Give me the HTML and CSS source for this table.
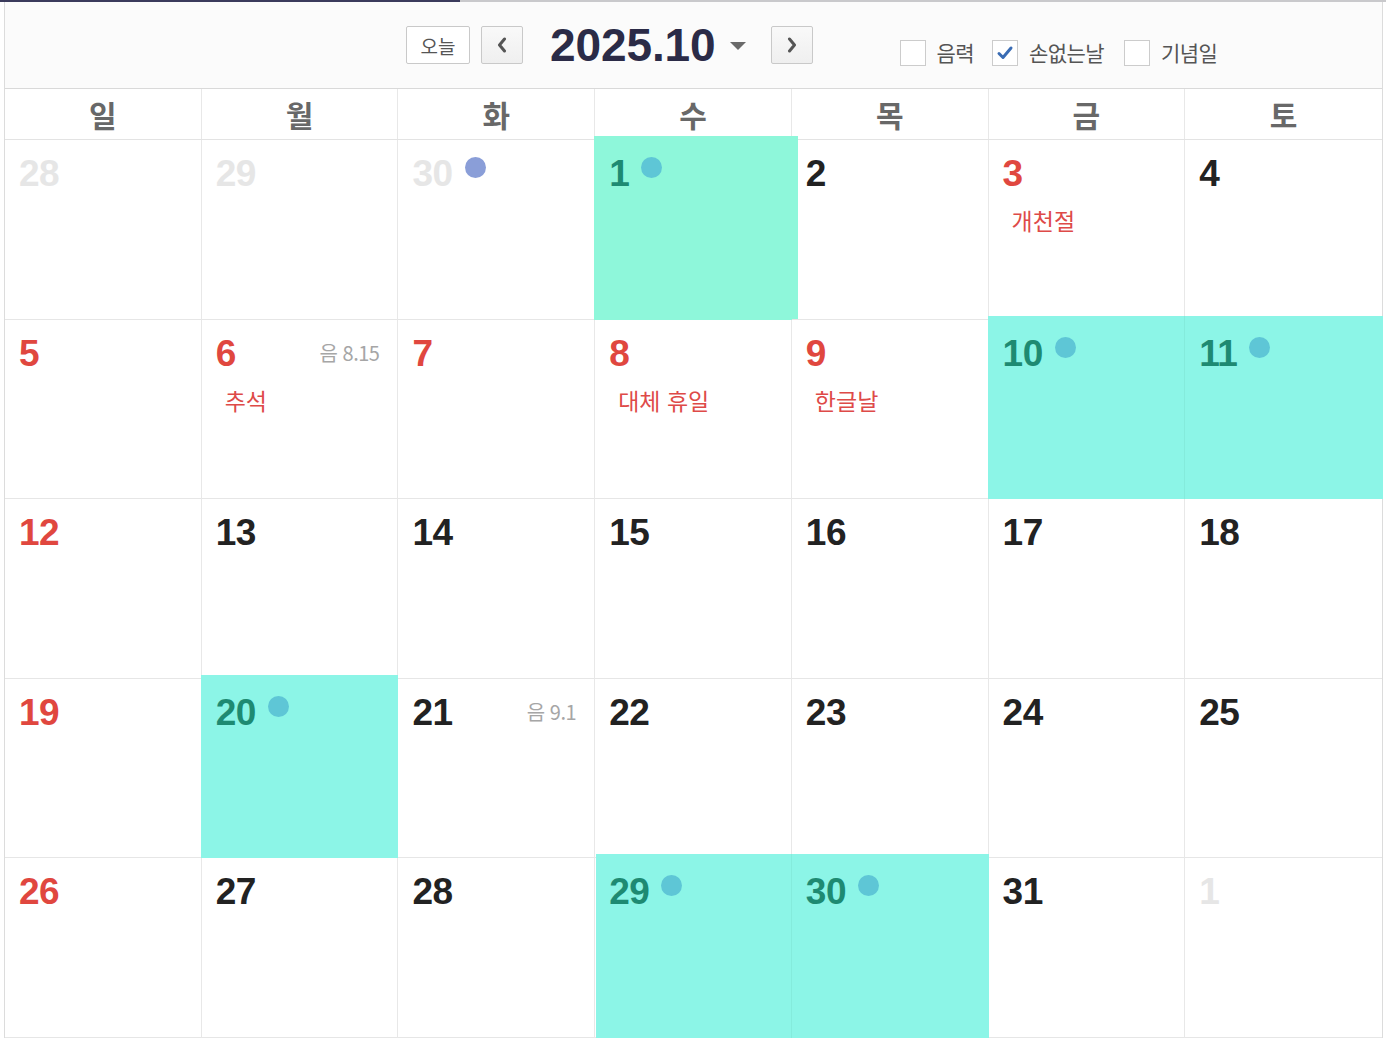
FILE: index.html
```html
<!DOCTYPE html>
<html lang="ko">
<head>
<meta charset="utf-8">
<title>2025.10 달력</title>
<link rel="stylesheet" href="styles.css">
</head>
<body>
<div class="top-line"><div class="top-line-fill"></div></div>
<div class="calendar">
  <div class="toolbar">
    <button class="btn btn-today">오늘</button>
    <button class="btn btn-nav btn-prev" aria-label="이전">
      <svg width="10" height="16" viewBox="0 0 10 16"><polyline points="7.5,2 2.5,8 7.5,14" fill="none" stroke="#555" stroke-width="3" stroke-linejoin="round" stroke-linecap="round"/></svg>
    </button>
    <div class="title">2025.10</div>
    <span class="caret"></span>
    <button class="btn btn-nav btn-next" aria-label="다음">
      <svg width="10" height="16" viewBox="0 0 10 16"><polyline points="2.5,2 7.5,8 2.5,14" fill="none" stroke="#555" stroke-width="3" stroke-linejoin="round" stroke-linecap="round"/></svg>
    </button>
    <div class="options">
      <label class="opt"><span class="box"></span><span class="opt-text">음력</span></label>
      <label class="opt"><span class="box checked"><svg width="18" height="16" viewBox="0 0 18 16"><polyline points="3,8.5 7,12.5 15,3" fill="none" stroke="#3a6cb4" stroke-width="3" stroke-linecap="round" stroke-linejoin="round"/></svg></span><span class="opt-text">손없는날</span></label>
      <label class="opt"><span class="box"></span><span class="opt-text">기념일</span></label>
    </div>
  </div>
  <div class="weekdays">
    <div class="wd">일</div><div class="wd">월</div><div class="wd">화</div><div class="wd">수</div><div class="wd">목</div><div class="wd">금</div><div class="wd">토</div>
  </div>
  <div class="grid">
    <!-- week 1 -->
    <div class="cell"><div class="head"><span class="num other">28</span></div></div>
    <div class="cell"><div class="head"><span class="num other">29</span></div></div>
    <div class="cell"><div class="head"><span class="num other">30</span><span class="dot dot-purple"></span></div></div>
    <div class="cell hl hl-first"><div class="head"><span class="num teal">1</span><span class="dot"></span></div></div>
    <div class="cell"><div class="head"><span class="num">2</span></div></div>
    <div class="cell"><div class="head"><span class="num red">3</span></div><div class="holiday">개천절</div></div>
    <div class="cell"><div class="head"><span class="num">4</span></div></div>
    <!-- week 2 -->
    <div class="cell"><div class="head"><span class="num red">5</span></div></div>
    <div class="cell"><div class="head"><span class="num red">6</span><span class="lunar">음 8.15</span></div><div class="holiday">추석</div></div>
    <div class="cell"><div class="head"><span class="num red">7</span></div></div>
    <div class="cell"><div class="head"><span class="num red">8</span></div><div class="holiday">대체 휴일</div></div>
    <div class="cell"><div class="head"><span class="num red">9</span></div><div class="holiday">한글날</div></div>
    <div class="cell hl"><div class="head"><span class="num teal">10</span><span class="dot"></span></div></div>
    <div class="cell hl hl-line"><div class="head"><span class="num teal">11</span><span class="dot"></span></div></div>
    <!-- week 3 -->
    <div class="cell"><div class="head"><span class="num red">12</span></div></div>
    <div class="cell"><div class="head"><span class="num">13</span></div></div>
    <div class="cell"><div class="head"><span class="num">14</span></div></div>
    <div class="cell"><div class="head"><span class="num">15</span></div></div>
    <div class="cell"><div class="head"><span class="num">16</span></div></div>
    <div class="cell"><div class="head"><span class="num">17</span></div></div>
    <div class="cell"><div class="head"><span class="num">18</span></div></div>
    <!-- week 4 -->
    <div class="cell"><div class="head"><span class="num red">19</span></div></div>
    <div class="cell hl"><div class="head"><span class="num teal">20</span><span class="dot"></span></div></div>
    <div class="cell"><div class="head"><span class="num">21</span><span class="lunar">음 9.1</span></div></div>
    <div class="cell"><div class="head"><span class="num">22</span></div></div>
    <div class="cell"><div class="head"><span class="num">23</span></div></div>
    <div class="cell"><div class="head"><span class="num">24</span></div></div>
    <div class="cell"><div class="head"><span class="num">25</span></div></div>
    <!-- week 5 -->
    <div class="cell"><div class="head"><span class="num red">26</span></div></div>
    <div class="cell"><div class="head"><span class="num">27</span></div></div>
    <div class="cell"><div class="head"><span class="num">28</span></div></div>
    <div class="cell hl hl-shift"><div class="head"><span class="num teal">29</span><span class="dot"></span></div></div>
    <div class="cell hl hl-line"><div class="head"><span class="num teal">30</span><span class="dot"></span></div></div>
    <div class="cell"><div class="head"><span class="num">31</span></div></div>
    <div class="cell"><div class="head"><span class="num other">1</span></div></div>
  </div>
</div>
</body>
</html>
```
FILE: styles.css
```css
* { box-sizing: border-box; }
html, body { margin: 0; padding: 0; background: #ffffff; }
body {
  width: 1386px;
  height: 1040px;
  overflow: hidden;
  font-family: "Liberation Sans", "Noto Sans CJK KR", sans-serif;
}

.top-line {
  height: 2px;
  background: #c9c9cc;
}
.top-line-fill {
  width: 460px;
  height: 2px;
  background: #3b3b5c;
}

.calendar {
  margin: 0 3px 0 4px;
  border-left: 1px solid #dcdcdc;
  border-right: 1px solid #dcdcdc;
}

/* toolbar */
.toolbar {
  height: 87px;
  background: #fbfbfb;
  border-bottom: 1px solid #d9d9d9;
  display: flex;
  align-items: center;
  padding-left: 401px;
}
.btn {
  height: 38px;
  border: 1px solid #c9c9c9;
  border-radius: 2px;
  background: #ffffff;
  padding: 0;
  margin: 0;
  display: flex;
  align-items: center;
  justify-content: center;
  font-family: "Noto Sans CJK KR", sans-serif;
}
.btn-today {
  width: 64px;
  font-size: 19px;
  color: #555;
  line-height: 1;
}
.btn-nav {
  width: 42px;
  background: linear-gradient(#f9f9f9, #efefef);
}
.btn-prev { margin-left: 11px; }
.title {
  margin-left: 27px;
  font-family: "Liberation Sans", sans-serif;
  font-weight: 700;
  font-size: 46px;
  line-height: 1;
  color: #2b2b47;
  letter-spacing: -0.1px;
}
.caret {
  margin-left: 14px;
  width: 0;
  height: 0;
  border-left: 8px solid transparent;
  border-right: 8px solid transparent;
  border-top: 8px solid #6a6a6a;
  margin-top: 1px;
}
.btn-next { margin-left: 25px; }

.options {
  display: flex;
  align-items: center;
  margin-left: 87px;
  margin-top: 15px;
}
.opt {
  display: flex;
  align-items: center;
  margin-right: 18px;
}
.opt:nth-child(2) { margin-right: 20px; }
.box {
  width: 26px;
  height: 26px;
  border: 1px solid #cccccc;
  background: #fff;
  display: flex;
  align-items: center;
  justify-content: center;
}
.opt-text {
  margin-left: 11px;
  font-family: "Noto Sans CJK KR", sans-serif;
  font-size: 21px;
  line-height: 1;
  color: #555;
  letter-spacing: -0.6px;
}

/* weekday header */
.weekdays {
  display: grid;
  grid-template-columns: repeat(7, 1fr);
  border-bottom: 1px solid #e3e3e3;
  background: #fff;
}
.wd {
  height: 50px;
  display: flex;
  align-items: center;
  justify-content: center;
  border-right: 1px solid #e8e8e8;
  font-family: "Noto Sans CJK KR", sans-serif;
  font-weight: 700;
  font-size: 30px;
  color: #686868;
  line-height: 1;
}
.wd:last-child { border-right: none; }

/* grid */
.grid {
  display: grid;
  grid-template-columns: repeat(7, 1fr);
  grid-template-rows: repeat(5, 179.6px);
}
.cell {
  position: relative;
  border-right: 1px solid #e8e8e8;
  border-bottom: 1px solid #e6e6e6;
  padding: 15px 18px 0 14px;
}
.cell:nth-child(7n) { border-right: none; }

.cell.hl::before {
  content: "";
  position: absolute;
  left: -1px;
  right: -1px;
  top: -4px;
  bottom: -1px;
  background: #8cf5e7;
  z-index: 0;
}
.cell.hl-first::before {
  right: -7px;
  background: #8ef7da;
}
.cell.hl-shift::before { left: 1px; }
.cell.hl-line::before { border-left: 1px solid #84ebdc; }

.head {
  position: relative;
  z-index: 1;
  display: flex;
  align-items: flex-start;
  height: 37px;
}
.num {
  font-family: "Liberation Sans", sans-serif;
  font-weight: 700;
  font-size: 37px;
  line-height: 37px;
  color: #222222;
  letter-spacing: -0.5px;
}
.num.red { color: #e0473f; }
.num.other { color: #e6e6e6; }
.num.teal { color: #1e8a72; }

.dot {
  width: 21px;
  height: 21px;
  border-radius: 50%;
  background: #5ec6d6;
  margin-left: 12px;
  margin-top: 2px;
}
.dot-purple { background: #8a9ed8; }

.lunar {
  margin-left: auto;
  align-self: center;
  font-family: "Noto Sans CJK KR", sans-serif;
  font-size: 20px;
  line-height: 20px;
  color: #a6a6a6;
  letter-spacing: -0.5px;
}

.holiday {
  position: relative;
  z-index: 1;
  margin-top: 17px;
  margin-left: 9px;
  font-family: "Noto Sans CJK KR", sans-serif;
  font-size: 23px;
  line-height: 23px;
  color: #de4a48;
}
```
